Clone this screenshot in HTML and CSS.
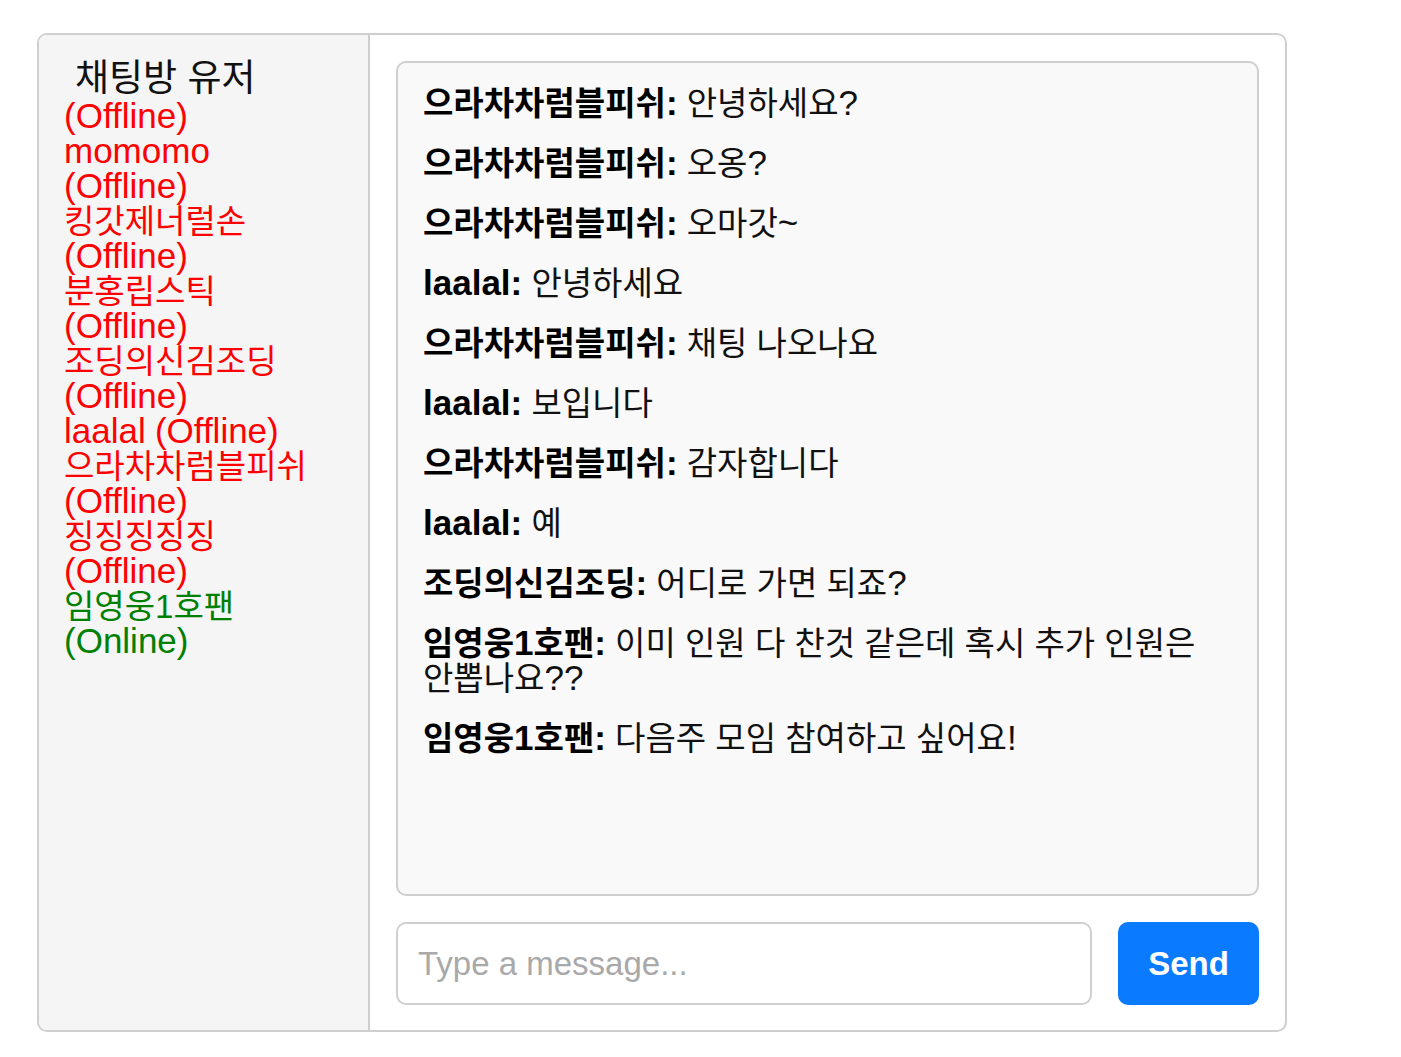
FILE: index.html
```html
<!DOCTYPE html>
<html lang="ko">
<head>
<meta charset="utf-8">
<title>Chat</title>
<link rel="stylesheet" href="styles.css">
</head>
<body>
<div class="chat">
  <aside class="users">
    <div class="users-title">채팅방 유저</div>
    <ul class="user-list">
      <li class="user offline"> <span class="lt">(Offline)</span></li>
      <li class="user offline"><span class="lt">momomo</span> <span class="lt">(Offline)</span></li>
      <li class="user offline">킹갓제너럴손 <span class="lt">(Offline)</span></li>
      <li class="user offline">분홍립스틱 <span class="lt">(Offline)</span></li>
      <li class="user offline">조딩의신김조딩 <span class="lt">(Offline)</span></li>
      <li class="user offline"><span class="lt">laalal</span> <span class="lt">(Offline)</span></li>
      <li class="user offline">으라차차럼블피쉬 <span class="lt">(Offline)</span></li>
      <li class="user offline">징징징징징 <span class="lt">(Offline)</span></li>
      <li class="user online">임영웅1호팬 <span class="lt">(Online)</span></li>
    </ul>
  </aside>
  <main class="room">
    <div class="messages">
      <p class="msg"><strong>으라차차럼블피쉬<span class="lt">:</span></strong> 안녕하세요<span class="lt">?</span></p>
      <p class="msg"><strong>으라차차럼블피쉬<span class="lt">:</span></strong> 오옹<span class="lt">?</span></p>
      <p class="msg"><strong>으라차차럼블피쉬<span class="lt">:</span></strong> 오마갓<span class="lt">~</span></p>
      <p class="msg"><strong><span class="lt">laalal:</span></strong> 안녕하세요</p>
      <p class="msg"><strong>으라차차럼블피쉬<span class="lt">:</span></strong> 채팅 나오나요</p>
      <p class="msg"><strong><span class="lt">laalal:</span></strong> 보입니다</p>
      <p class="msg"><strong>으라차차럼블피쉬<span class="lt">:</span></strong> 감자합니다</p>
      <p class="msg"><strong><span class="lt">laalal:</span></strong> 예</p>
      <p class="msg"><strong>조딩의신김조딩<span class="lt">:</span></strong> 어디로 가면 되죠<span class="lt">?</span></p>
      <p class="msg"><strong>임영웅<span class="lt">1</span>호팬<span class="lt">:</span></strong> 이미 인원 다 찬것 같은데 혹시 추가 인원은 안뽑나요<span class="lt">??</span></p>
      <p class="msg"><strong>임영웅<span class="lt">1</span>호팬<span class="lt">:</span></strong> 다음주 모임 참여하고 싶어요<span class="lt">!</span></p>
    </div>
    <form class="composer">
      <input class="composer-input" type="text" placeholder="Type a message...">
      <button class="composer-send" type="button">Send</button>
    </form>
  </main>
</div>
</body>
</html>
```

FILE: styles.css
```css
* {
  box-sizing: border-box;
}

html, body {
  margin: 0;
  padding: 0;
  background: #ffffff;
}

body {
  font-family: "Liberation Sans", Arial, "Noto Sans CJK KR", sans-serif;
  color: #000;
  word-break: keep-all;
}

.lt {
  font-size: 35px;
  line-height: 20px;
}

.chat {
  margin: 33px 0 0 37px;
  width: 1250px;
  height: 999px;
  border: 2px solid #cfcfcf;
  border-radius: 10px;
  display: flex;
  overflow: hidden;
  background: #fff;
}

.users {
  width: 331px;
  flex: none;
  background: #f5f5f5;
  border-right: 2px solid #cfcfcf;
  padding: 24px 25px;
}

.users-title {
  font-size: 37px;
  line-height: 40px;
  padding-left: 11px;
  color: #111;
}

.user-list {
  list-style: none;
  margin: 0;
  padding: 0;
  width: 252px;
  font-size: 33px;
  line-height: 35px;
}

.user {
  display: block;
}

.user.offline {
  color: #ff0000;
}

.user.online {
  color: #008000;
}

.room {
  flex: 1;
  display: flex;
  flex-direction: column;
  gap: 26px;
  padding: 26px 26px 25px 26px;
}

.messages {
  flex: 1;
  background: #f9f9f9;
  border: 2px solid #cfcfcf;
  border-radius: 10px;
  padding: 23px 25px 22px;
  overflow: hidden;
}

.msg {
  margin: 0 0 25px;
  font-size: 33px;
  line-height: 35px;
  color: #111;
}

.msg strong {
  font-weight: bold;
  color: #000;
}

.composer {
  display: flex;
  gap: 26px;
  height: 83px;
  margin: 0;
}

.composer-input {
  flex: 1;
  min-width: 0;
  height: 83px;
  border: 2px solid #cfcfcf;
  border-radius: 10px;
  padding: 0 20px;
  font-family: "Liberation Sans", Arial, sans-serif;
  font-size: 33px;
  color: #111;
  background: #fff;
  outline: none;
}

.composer-input::placeholder {
  color: #a9a9a9;
}

.composer-send {
  width: 141px;
  height: 83px;
  flex: none;
  border: none;
  border-radius: 10px;
  background: #0a7bff;
  color: #fff;
  font-family: "Liberation Sans", Arial, sans-serif;
  font-size: 33px;
  font-weight: bold;
  cursor: pointer;
}
```
